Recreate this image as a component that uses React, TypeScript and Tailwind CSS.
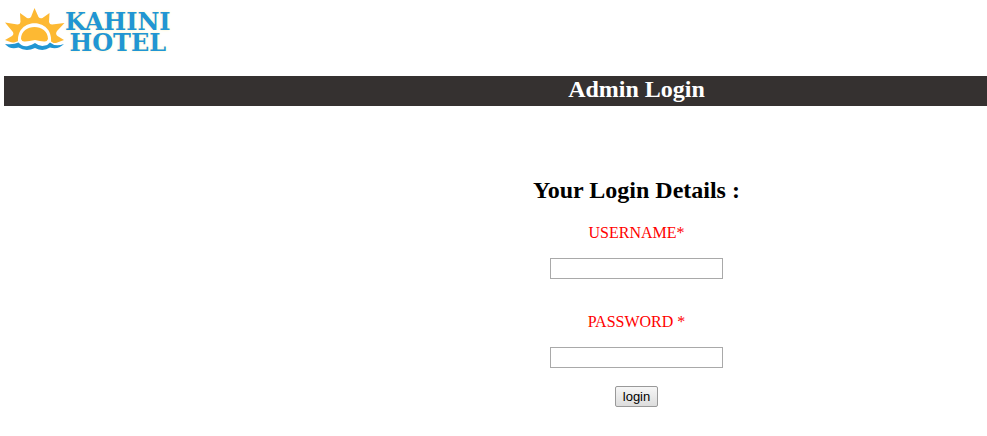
function SunLogo() {
  return (
    <svg width="61" height="48" viewBox="0 0 61 48" aria-hidden="true">
      <path
        fill="#fdb933"
        d="M30.500 3 L34.500 12 Q36 14 38.500 13 L45.500 8 L45 17 Q45.500 19.500 48 19.500 L60.500 18 L53 26 Q51 29 53.500 31 L60 35 L52 38 L9 38 L1 35 L8 31 Q10.500 29 8.500 26.500 L1 17.500 L13.500 19.500 Q16 19.500 16.500 17 L16 8 L23 13 Q25.500 14 27 12 Z"
      />
      <path fill="#fff" d="M14 37 C12 12 49 12 47 37 L44 42 L17 42 Z" />
      <path fill="#fdb933" d="M17 34 C17 18 44 18 44 34 Q43 37 40 36.500 Q36 36 31 35 Q25 36 21 36.500 Q18 37 17 34 Z" />
      <path
        fill="#2196d3"
        stroke="#fff"
        strokeWidth="3"
        paintOrder="stroke"
        d="M1 39 Q10 40 14.500 37.500 Q18 42 24 41 Q28 40 31 38 Q36 42 41 40.500 Q44 40 46 37.500 Q51 42 60 39 Q54 45 46 42.500 Q39 47 31 43 Q22 47 14.500 42.500 Q6 45 1 39 Z"
      />
    </svg>
  );
}

type FieldProps = { id: string; label: string; type: string };

function Field({ id, label, type }: FieldProps) {
  return (
    <div className="flex flex-col items-center gap-4">
      <label htmlFor={id} className="text-base leading-[18px] text-[#ff0000]">
        {label}
      </label>
      <input
        id={id}
        name={id}
        type={type}
        className="h-[21px] w-[173px] border border-[#a9a9a9] bg-white px-1 font-['Liberation_Sans',sans-serif] text-[13px] text-black"
      />
    </div>
  );
}

export default function App() {
  return (
    <div className="bg-white pl-1 font-['Liberation_Serif',serif] text-black">
      <header>
        <div className="flex h-[76px] items-start pt-[5px]">
          <SunLogo />
          <div className="pt-1.5 text-center font-['DejaVu_Serif',serif] text-2xl leading-[21px] font-bold text-[#2196d3] [text-shadow:0_0_3px_#fff3bf]">
            <div>KAHINI</div>
            <div>HOTEL</div>
          </div>
        </div>
        <div className="h-[30px] bg-[#353130] pl-[282px]">
          <h1 className="text-center text-2xl leading-[27px] font-bold text-white">Admin Login</h1>
        </div>
      </header>
      <main className="pt-[71px] pl-[282px]">
        <form className="flex flex-col items-center" onSubmit={(e) => e.preventDefault()}>
          <h2 className="mb-5 text-2xl leading-[27px] font-bold">Your Login Details :</h2>
          <div className="flex flex-col gap-[34px]">
            <Field id="username" label="USERNAME*" type="text" />
            <Field id="password" label="PASSWORD *" type="password" />
          </div>
          <button
            type="submit"
            className="mt-[18px] h-[21px] w-[43px] rounded-[2px] border border-[#999999] bg-linear-to-b from-[#f6f6f6] to-[#dddddd] font-['Liberation_Sans',sans-serif] text-[13px] leading-4 text-black"
          >
            login
          </button>
        </form>
      </main>
    </div>
  );
}
